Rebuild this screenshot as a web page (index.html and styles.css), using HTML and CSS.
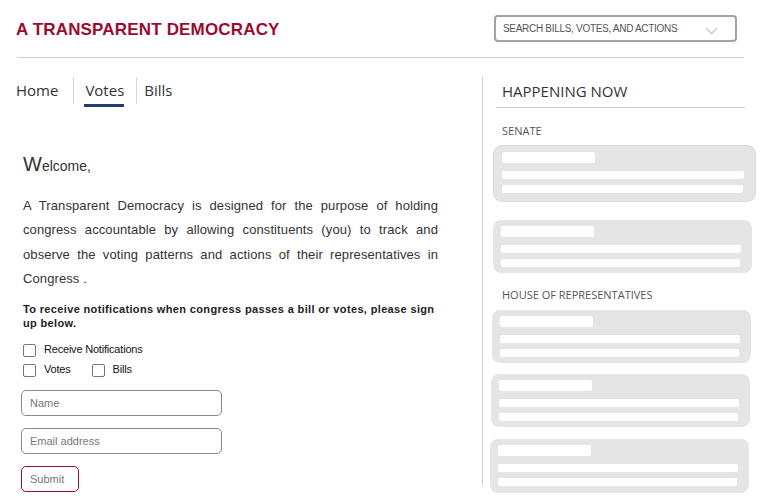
FILE: index.html
```html
<!DOCTYPE html>
<html lang="en">
<head>
<meta charset="utf-8">
<title>A Transparent Democracy</title>
<link rel="stylesheet" href="styles.css">
</head>
<body>
<header class="header">
  <h1 class="brand">A TRANSPARENT DEMOCRACY</h1>
  <div class="search">
    <span class="search-text">SEARCH BILLS, VOTES, AND ACTIONS</span>
    <svg class="chev" width="13" height="8" viewBox="0 0 13 8"><path d="M1 1 L6.5 6.5 L12 1" fill="none" stroke="#c8c8c8" stroke-width="1.3"/></svg>
  </div>
</header>
<main class="main">
  <section class="left">
    <nav class="nav">
      <a class="nav-item">Home</a>
      <span class="nav-sep"></span>
      <a class="nav-item active">Votes</a>
      <span class="nav-sep"></span>
      <a class="nav-item">Bills</a>
    </nav>
    <div class="content">
      <p class="welcome"><span class="big">W</span>elcome,</p>
      <p class="intro">A Transparent Democracy is designed for the purpose of holding congress accountable by allowing constituents (you) to track and observe the voting patterns and actions of their representatives in Congress .</p>
      <p class="signup">To receive notifications when congress passes a bill or votes, please sign up below.</p>
      <div class="checks">
        <label class="check"><span class="box"></span>Receive Notifications</label>
        <div class="check-row">
          <label class="check"><span class="box"></span>Votes</label>
          <label class="check"><span class="box"></span>Bills</label>
        </div>
      </div>
      <div class="field">Name</div>
      <div class="field">Email address</div>
      <div class="submit">Submit</div>
    </div>
  </section>
  <aside class="right">
    <h2 class="now">HAPPENING NOW</h2>
    <h3 class="group">SENATE</h3>
    <div class="card c1"><span class="bar t"></span><span class="bar l1"></span><span class="bar l2"></span></div>
    <div class="card c2"><span class="bar t"></span><span class="bar l1"></span><span class="bar l2"></span></div>
    <h3 class="group house">HOUSE OF REPRESENTATIVES</h3>
    <div class="card c3"><span class="bar t"></span><span class="bar l1"></span><span class="bar l2"></span></div>
    <div class="card c4"><span class="bar t"></span><span class="bar l1"></span><span class="bar l2"></span></div>
    <div class="card c5"><span class="bar t"></span><span class="bar l1"></span><span class="bar l2"></span></div>
  </aside>
</main>
</body>
</html>
```
FILE: styles.css
```css
* { box-sizing: border-box; }
html, body { margin: 0; padding: 0; background: #fff; }
body {
  width: 766px;
  height: 502px;
  overflow: hidden;
  font-family: "Liberation Sans", Arial, sans-serif;
  color: #333;
}
.header {
  display: flex;
  justify-content: space-between;
  align-items: center;
  margin: 0 22px 0 17px;
  padding: 14px 7px 15px 0;
  height: 58px;
  border-bottom: 1px solid #cfcfcf;
}
.brand {
  margin: 3px 0 0 -1px;
  font-size: 17px;
  font-weight: bold;
  color: #9c0b2f;
  letter-spacing: 0.17px;
}
.search {
  width: 243px;
  height: 27px;
  border: 2px solid #a3a3a3;
  border-radius: 4px;
  display: flex;
  align-items: center;
  justify-content: space-between;
  padding: 0 17px 0 7px;
}
.search-text {
  font-size: 10px;
  color: #555;
  letter-spacing: -0.3px;
}
.chev { margin-top: 5px; }
.main {
  display: flex;
}
.left {
  width: 483px;
  border-right: 1px solid #cfcfcf;
  margin-top: 19px;
  height: 408px;
}
.nav {
  display: flex;
  align-items: stretch;
  height: 27px;
  padding-left: 16px;
  font-family: "Open Sans", sans-serif;
  font-size: 15px;
}
.nav-item {
  color: #333;
  padding-top: 3px;
  line-height: 20px;
  height: 30px;
}
.nav-item.active {
  position: relative;
}
.nav-item.active::after {
  content: "";
  position: absolute;
  left: -1px;
  right: 0;
  bottom: 0;
  height: 3px;
  background: #1f3e72;
}
.nav-sep {
  width: 1px;
  height: 27px;
  background: #d4d4d4;
  margin: 0 11px 0 15px;
}
.nav-sep + .nav-item.active + .nav-sep { margin-left: 12px; margin-right: 7px; }
.content {
  padding: 50px 44px 0 23px;
}
.welcome {
  margin: 0;
  font-size: 14px;
  line-height: 20px;
}
.welcome .big { font-size: 20px; }
.intro {
  margin: 18px 0 0;
  font-size: 13px;
  line-height: 24.4px;
  text-align: justify;
  letter-spacing: 0.1px;
}
.signup {
  margin: 10px -6px 0 0;
  font-size: 11px;
  font-weight: bold;
  line-height: 14px;
  color: #222;
  letter-spacing: 0.35px;
}
.checks { margin-top: 9px; }
.check {
  display: flex;
  align-items: center;
  font-size: 11px;
  color: #111;
  height: 20px;
  letter-spacing: -0.2px;
}
.check-row { display: flex; }
.check-row .check { margin-right: 23px; }
.check-row .check:first-child { margin-right: 21px; }
.box {
  width: 13px;
  height: 13px;
  border: 1px solid #777;
  border-radius: 2px;
  margin-right: 8px;
  margin-top: 4px;
}
.field {
  margin-left: -2px;
  margin-top: 11px;
  width: 201px;
  height: 26px;
  border: 1px solid #8a8a8a;
  border-radius: 5px;
  padding: 0 8px;
  font-size: 11px;
  line-height: 24px;
  color: #777;
}
.field + .field { margin-top: 12px; }
.submit {
  margin-left: -2px;
  margin-top: 12px;
  width: 58px;
  height: 26px;
  border: 1px solid #9c0b2f;
  border-radius: 5px;
  padding-left: 8px;
  font-size: 11px;
  line-height: 24px;
  color: #777;
}
.right {
  width: 283px;
  padding: 0 21px 0 13px;
  margin-top: 19px;
}
.now {
  margin: 0;
  padding: 5px 0 7px 6px;
  font-family: "Open Sans", sans-serif;
  font-weight: normal;
  font-size: 15px;
  line-height: 18px;
  color: #333;
  border-bottom: 1px solid #cfcfcf;
}
.group {
  margin: 16px 0 0 6px;
  font-family: "Open Sans", sans-serif;
  font-weight: normal;
  font-size: 11px;
  line-height: 14px;
  color: #555;
}
.group.house { margin-top: 15px; }
.card {
  position: relative;
  background: #e5e5e5;
  border-radius: 8px;
  height: 54px;
  margin-top: 8px;
  display: flex;
  flex-direction: column;
  padding: 6px 11px 0 8px;
}
.c1 { margin-left: -2px; width: 261px; height: 55px; box-shadow: 0 0 0 1px #dadada; }
.c2 { margin-left: -3px; width: 259px; margin-top: 19px; height: 53px; }
.c3 { margin-left: -4px; width: 259px; height: 53px; }
.c4 { margin-left: -5px; width: 259px; margin-top: 11px; height: 53px; }
.c5 { margin-left: -6px; width: 259px; margin-top: 12px; height: 54px; }
.bar {
  display: block;
  background: #fff;
  border-radius: 2px;
}
.bar.t { width: 93px; height: 11px; }
.bar.l1 { height: 8px; margin-top: 8px; }
.bar.l2 { height: 8px; margin-top: 6px; margin-right: 1px; }
```
